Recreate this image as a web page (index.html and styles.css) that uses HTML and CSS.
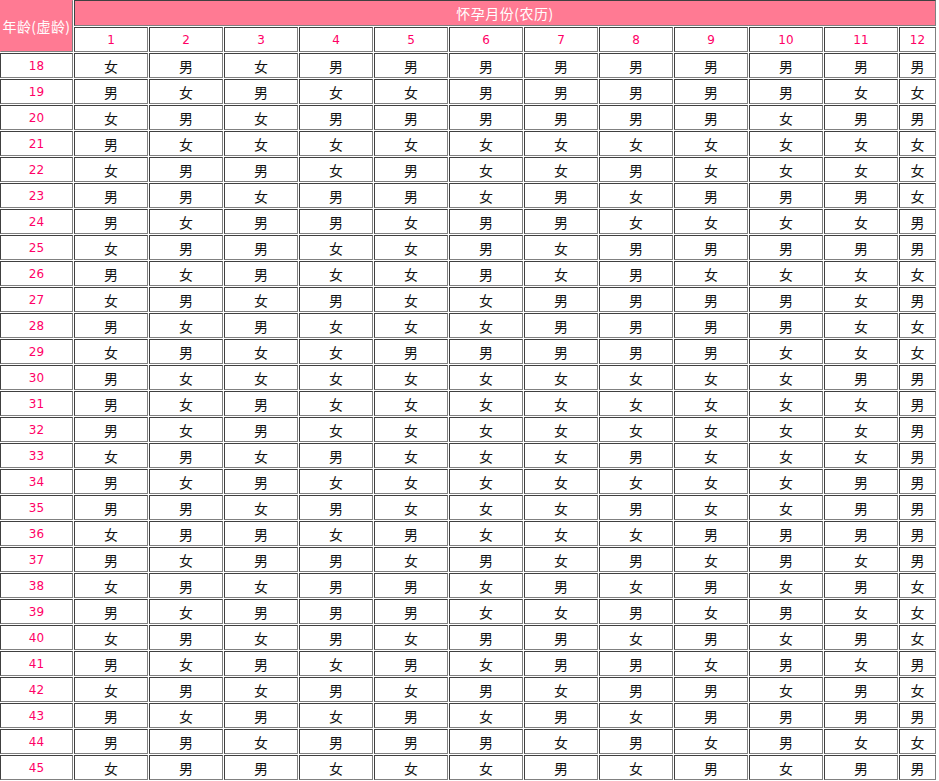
FILE: index.html
```html
<!DOCTYPE html>
<html lang="zh-CN">
<head>
<meta charset="utf-8">
<title>清宫生男生女图</title>
<link rel="stylesheet" href="styles.css">
</head>
<body>
<table class="chart">
<thead>
<tr class="top">
<th class="corner" rowspan="2">年龄(虚龄)</th>
<th class="title" colspan="12">怀孕月份(农历)</th>
</tr>
<tr class="months">
<th class="m">1</th><th class="m">2</th><th class="m">3</th><th class="m">4</th><th class="m">5</th><th class="m">6</th><th class="m">7</th><th class="m">8</th><th class="m">9</th><th class="m">10</th><th class="m">11</th><th class="m last">12</th>
</tr>
</thead>
<tbody>
<tr><th class="age">18</th><td>女</td><td>男</td><td>女</td><td>男</td><td>男</td><td>男</td><td>男</td><td>男</td><td>男</td><td>男</td><td>男</td><td>男</td></tr>
<tr><th class="age">19</th><td>男</td><td>女</td><td>男</td><td>女</td><td>女</td><td>男</td><td>男</td><td>男</td><td>男</td><td>男</td><td>女</td><td>女</td></tr>
<tr><th class="age">20</th><td>女</td><td>男</td><td>女</td><td>男</td><td>男</td><td>男</td><td>男</td><td>男</td><td>男</td><td>女</td><td>男</td><td>男</td></tr>
<tr><th class="age">21</th><td>男</td><td>女</td><td>女</td><td>女</td><td>女</td><td>女</td><td>女</td><td>女</td><td>女</td><td>女</td><td>女</td><td>女</td></tr>
<tr><th class="age">22</th><td>女</td><td>男</td><td>男</td><td>女</td><td>男</td><td>女</td><td>女</td><td>男</td><td>女</td><td>女</td><td>女</td><td>女</td></tr>
<tr><th class="age">23</th><td>男</td><td>男</td><td>女</td><td>男</td><td>男</td><td>女</td><td>男</td><td>女</td><td>男</td><td>男</td><td>男</td><td>女</td></tr>
<tr><th class="age">24</th><td>男</td><td>女</td><td>男</td><td>男</td><td>女</td><td>男</td><td>男</td><td>女</td><td>女</td><td>女</td><td>女</td><td>男</td></tr>
<tr><th class="age">25</th><td>女</td><td>男</td><td>男</td><td>女</td><td>女</td><td>男</td><td>女</td><td>男</td><td>男</td><td>男</td><td>男</td><td>男</td></tr>
<tr><th class="age">26</th><td>男</td><td>女</td><td>男</td><td>女</td><td>女</td><td>男</td><td>女</td><td>男</td><td>女</td><td>女</td><td>女</td><td>女</td></tr>
<tr><th class="age">27</th><td>女</td><td>男</td><td>女</td><td>男</td><td>女</td><td>女</td><td>男</td><td>男</td><td>男</td><td>男</td><td>女</td><td>男</td></tr>
<tr><th class="age">28</th><td>男</td><td>女</td><td>男</td><td>女</td><td>女</td><td>女</td><td>男</td><td>男</td><td>男</td><td>男</td><td>女</td><td>女</td></tr>
<tr><th class="age">29</th><td>女</td><td>男</td><td>女</td><td>女</td><td>男</td><td>男</td><td>男</td><td>男</td><td>男</td><td>女</td><td>女</td><td>女</td></tr>
<tr><th class="age">30</th><td>男</td><td>女</td><td>女</td><td>女</td><td>女</td><td>女</td><td>女</td><td>女</td><td>女</td><td>女</td><td>男</td><td>男</td></tr>
<tr><th class="age">31</th><td>男</td><td>女</td><td>男</td><td>女</td><td>女</td><td>女</td><td>女</td><td>女</td><td>女</td><td>女</td><td>女</td><td>男</td></tr>
<tr><th class="age">32</th><td>男</td><td>女</td><td>男</td><td>女</td><td>女</td><td>女</td><td>女</td><td>女</td><td>女</td><td>女</td><td>女</td><td>男</td></tr>
<tr><th class="age">33</th><td>女</td><td>男</td><td>女</td><td>男</td><td>女</td><td>女</td><td>女</td><td>男</td><td>女</td><td>女</td><td>女</td><td>男</td></tr>
<tr><th class="age">34</th><td>男</td><td>女</td><td>男</td><td>女</td><td>女</td><td>女</td><td>女</td><td>女</td><td>女</td><td>女</td><td>男</td><td>男</td></tr>
<tr><th class="age">35</th><td>男</td><td>男</td><td>女</td><td>男</td><td>女</td><td>女</td><td>女</td><td>男</td><td>女</td><td>女</td><td>男</td><td>男</td></tr>
<tr><th class="age">36</th><td>女</td><td>男</td><td>男</td><td>女</td><td>男</td><td>女</td><td>女</td><td>女</td><td>男</td><td>男</td><td>男</td><td>男</td></tr>
<tr><th class="age">37</th><td>男</td><td>女</td><td>男</td><td>男</td><td>女</td><td>男</td><td>女</td><td>男</td><td>女</td><td>男</td><td>女</td><td>男</td></tr>
<tr><th class="age">38</th><td>女</td><td>男</td><td>女</td><td>男</td><td>男</td><td>女</td><td>男</td><td>女</td><td>男</td><td>女</td><td>男</td><td>女</td></tr>
<tr><th class="age">39</th><td>男</td><td>女</td><td>男</td><td>男</td><td>男</td><td>女</td><td>女</td><td>男</td><td>女</td><td>男</td><td>女</td><td>女</td></tr>
<tr><th class="age">40</th><td>女</td><td>男</td><td>女</td><td>男</td><td>女</td><td>男</td><td>男</td><td>女</td><td>男</td><td>女</td><td>男</td><td>女</td></tr>
<tr><th class="age">41</th><td>男</td><td>女</td><td>男</td><td>女</td><td>男</td><td>女</td><td>男</td><td>男</td><td>女</td><td>男</td><td>女</td><td>男</td></tr>
<tr><th class="age">42</th><td>女</td><td>男</td><td>女</td><td>男</td><td>女</td><td>男</td><td>女</td><td>男</td><td>男</td><td>女</td><td>男</td><td>女</td></tr>
<tr><th class="age">43</th><td>男</td><td>女</td><td>男</td><td>女</td><td>男</td><td>女</td><td>男</td><td>女</td><td>男</td><td>男</td><td>男</td><td>男</td></tr>
<tr><th class="age">44</th><td>男</td><td>男</td><td>女</td><td>男</td><td>男</td><td>男</td><td>女</td><td>男</td><td>女</td><td>男</td><td>女</td><td>女</td></tr>
<tr><th class="age">45</th><td>女</td><td>男</td><td>男</td><td>女</td><td>女</td><td>女</td><td>男</td><td>女</td><td>男</td><td>女</td><td>男</td><td>男</td></tr>
</tbody>
</table>
</body>
</html>
```

FILE: styles.css
```css
html, body {
  margin: 0;
  padding: 0;
  background: #ffffff;
}

.chart {
  border-collapse: separate;
  border-spacing: 1px;
  margin: -1px 0 0 -1px;
  font-family: "Noto Sans CJK SC", "Noto Sans", sans-serif;
  font-size: 14px;
  color: #000000;
}

.chart th,
.chart td {
  box-sizing: border-box;
  height: 25px;
  padding: 0;
  text-align: center;
  vertical-align: middle;
  font-weight: normal;
  line-height: 16px;
  border: 1px solid;
  border-color: #404040 #808080 #808080 #404040;
  white-space: nowrap;
}

.chart .top th {
  height: 26px;
}

.chart .corner {
  width: 73px;
  background: #ff7a93;
  color: #ffffff;
  letter-spacing: 0.4px;
  border-color: #ff7a93 #808080 #808080 #ff7a93;
}

.chart .title {
  background: #ff7a93;
  color: #ffffff;
  letter-spacing: 0.5px;
  line-height: 14px;
}

.chart .m,
.chart .age {
  font-family: "DejaVu Sans", Verdana, sans-serif;
  font-size: 12px;
  color: #ff0066;
}

.chart .m {
  width: 74px;
}

.chart .m.last {
  width: 37px;
}

.chart td {
  color: #111111;
}
```
